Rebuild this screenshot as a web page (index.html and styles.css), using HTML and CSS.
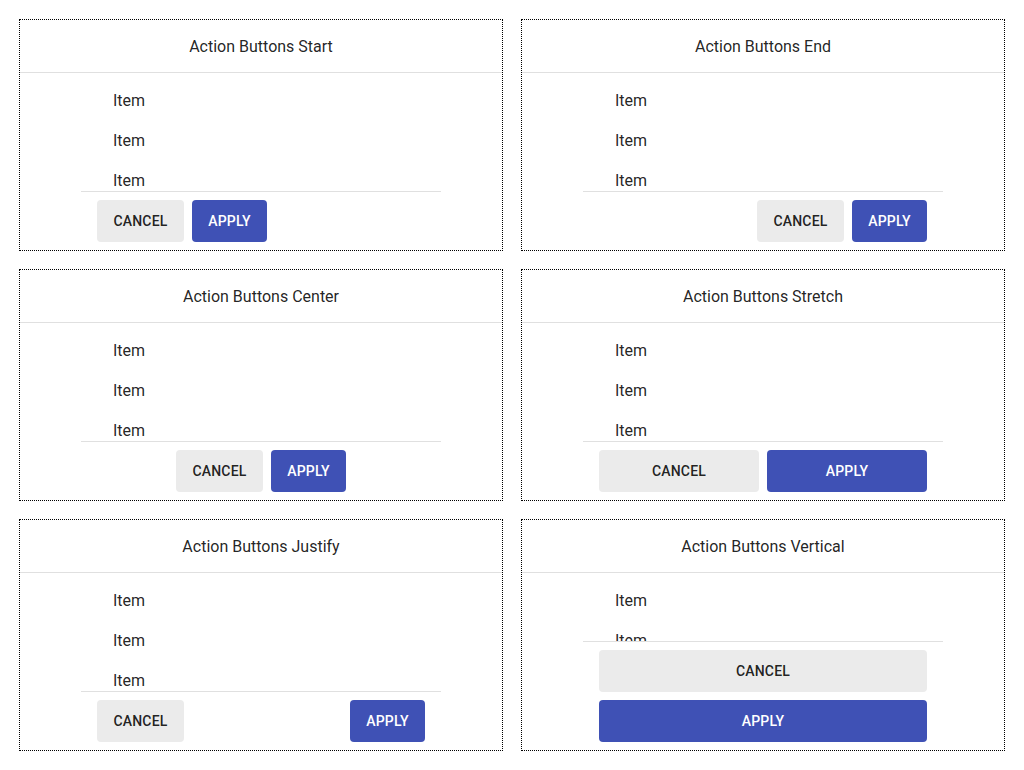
FILE: index.html
```html
<!DOCTYPE html>
<html>
<head>
<meta charset="utf-8">
<link rel="stylesheet" href="styles.css">
</head>
<body>
<div class="grid">
  <div class="card">
    <div class="title">Action Buttons Start</div>
    <div class="dialog">
      <div class="content"><div class="item">Item</div><div class="item">Item</div><div class="item">Item</div></div>
      <div class="actions start"><button class="btn cancel">Cancel</button><button class="btn apply">Apply</button></div>
    </div>
  </div>
  <div class="card">
    <div class="title">Action Buttons End</div>
    <div class="dialog">
      <div class="content"><div class="item">Item</div><div class="item">Item</div><div class="item">Item</div></div>
      <div class="actions end"><button class="btn cancel">Cancel</button><button class="btn apply">Apply</button></div>
    </div>
  </div>
  <div class="card">
    <div class="title">Action Buttons Center</div>
    <div class="dialog">
      <div class="content"><div class="item">Item</div><div class="item">Item</div><div class="item">Item</div></div>
      <div class="actions center"><button class="btn cancel">Cancel</button><button class="btn apply">Apply</button></div>
    </div>
  </div>
  <div class="card">
    <div class="title">Action Buttons Stretch</div>
    <div class="dialog">
      <div class="content"><div class="item">Item</div><div class="item">Item</div><div class="item">Item</div></div>
      <div class="actions stretch"><button class="btn cancel">Cancel</button><button class="btn apply">Apply</button></div>
    </div>
  </div>
  <div class="card">
    <div class="title">Action Buttons Justify</div>
    <div class="dialog">
      <div class="content"><div class="item">Item</div><div class="item">Item</div><div class="item">Item</div></div>
      <div class="actions justify"><button class="btn cancel">Cancel</button><button class="btn apply">Apply</button></div>
    </div>
  </div>
  <div class="card">
    <div class="title">Action Buttons Vertical</div>
    <div class="dialog">
      <div class="content short"><div class="item">Item</div><div class="item">Item</div><div class="item">Item</div></div>
      <div class="actions vertical"><button class="btn cancel">Cancel</button><button class="btn apply">Apply</button></div>
    </div>
  </div>
</div>
</body>
</html>
```
FILE: styles.css
```css
* { box-sizing: border-box; }
html, body { margin: 0; padding: 0; background: #fff; }
body {
  font-family: Roboto, "Liberation Sans", sans-serif;
  color: rgba(0,0,0,0.87);
  padding: 19px;
}
.grid {
  display: grid;
  grid-template-columns: 484px 484px;
  column-gap: 18px;
  row-gap: 18px;
}
.card {
  border: 1px dotted #000;
  height: 232px;
  display: flex;
  flex-direction: column;
}
.title {
  height: 53px;
  border-bottom: 1px solid #e0e0e0;
  display: flex;
  align-items: center;
  justify-content: center;
  font-size: 16px;
}
.dialog {
  width: 360px;
  margin: 0 auto;
  display: flex;
  flex-direction: column;
}
.content {
  height: 119px;
  padding-top: 8px;
  overflow: hidden;
  border-bottom: 1px solid #e0e0e0;
}
.content.short { height: 69px; }
.item {
  height: 40px;
  line-height: 40px;
  padding-left: 32px;
  font-size: 16px;
}
.actions {
  display: flex;
  gap: 8px;
  padding: 8px 16px;
}
.actions.end { justify-content: flex-end; }
.actions.center { justify-content: center; }
.actions.justify { justify-content: space-between; }
.actions.stretch .btn { flex: 1; }
.actions.vertical { flex-direction: column; }
.btn {
  font-family: Roboto, "Liberation Sans", sans-serif;
  font-size: 14px;
  font-weight: 500;
  text-transform: uppercase;
  letter-spacing: 0.2px;
  height: 42px;
  padding: 0 16px;
  border: none;
  border-radius: 4px;
  cursor: pointer;
}
.cancel { background: #ebebeb; color: rgba(0,0,0,0.87); min-width: 87px; }
.apply { background: #3f51b5; color: #fff; min-width: 75px; }
```
